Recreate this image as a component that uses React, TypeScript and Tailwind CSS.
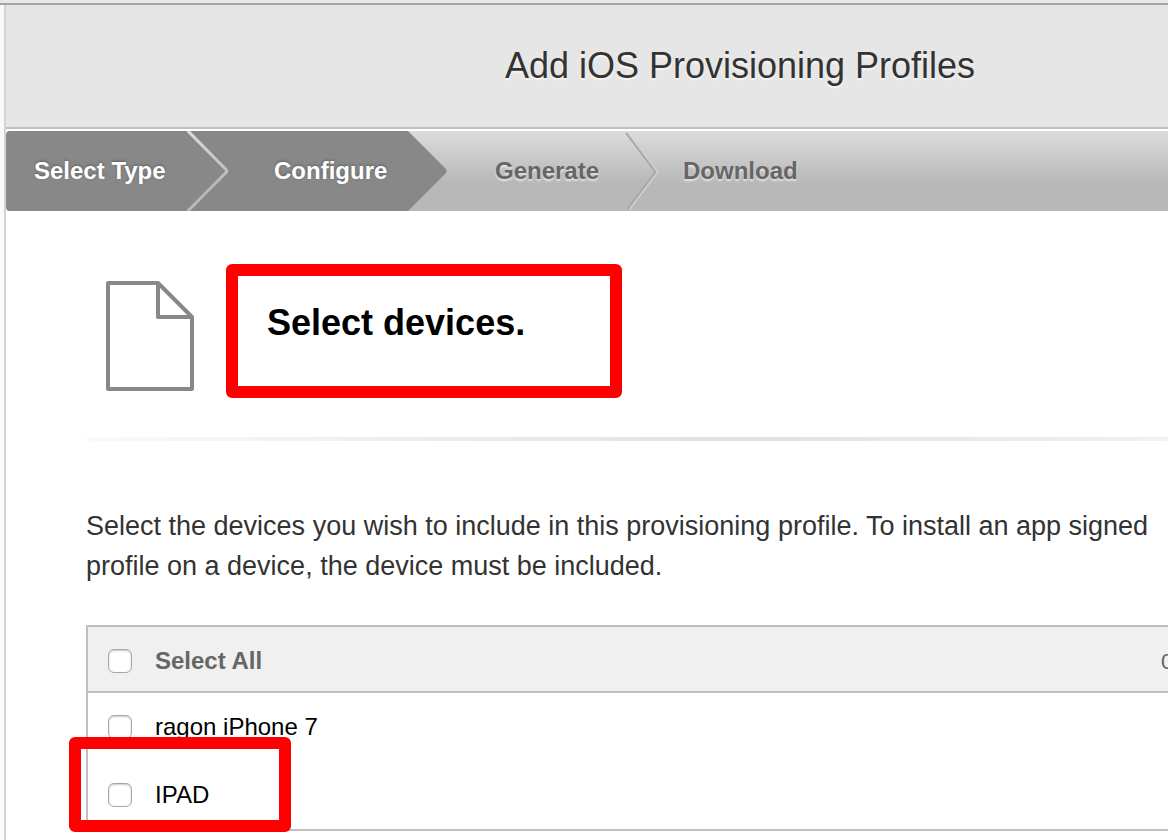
import React from "react";

const checkboxClass =
  "block size-6 appearance-none rounded-md border border-[#a6a6a6] bg-white shadow-[inset_0_1px_2px_rgba(0,0,0,0.22)] checked:bg-[#888888]";

const devices = [
  { id: "device-iphone", name: "ragon iPhone 7", highlighted: false },
  { id: "device-ipad", name: "IPAD", highlighted: true },
];

function StepDivider() {
  return (
    <svg className="block h-20 w-[42px] shrink-0" viewBox="0 0 42 80" aria-hidden="true">
      <defs>
        <linearGradient id="divider-stroke" gradientUnits="userSpaceOnUse" x1="0" y1="0" x2="0" y2="80">
          <stop offset="0" stopColor="#dcdcdc" />
          <stop offset="0.65" stopColor="#b8b8b8" />
          <stop offset="1" stopColor="#b8b8b8" />
        </linearGradient>
      </defs>
      <rect width="42" height="80" fill="#888888" />
      <path d="M-1 -2L39 38.500Q40.500 40 39 41.500L-1 82" fill="none" stroke="url(#divider-stroke)" strokeWidth="3" />
    </svg>
  );
}

function StepArrow() {
  return (
    <svg className="block h-20 w-[39px] shrink-0" viewBox="0 0 39 80" aria-hidden="true">
      <path d="M0 0L38 38Q39 40 38 42L0 80Z" fill="#888888" />
    </svg>
  );
}

function StepChevron() {
  return (
    <svg className="block h-20 w-9 shrink-0" viewBox="0 0 36 80" aria-hidden="true">
      <path d="M2.500 2L32.500 41L4.500 78" fill="none" stroke="#d0d0d0" strokeWidth="2" />
      <path d="M1 2L30.500 41L2.500 78" fill="none" stroke="#a8a8a8" strokeWidth="2" />
    </svg>
  );
}

function DocumentIcon() {
  return (
    <svg className="block h-[110px] w-[88px] shrink-0" viewBox="0 0 88 110" aria-hidden="true">
      <path
        d="M52 2H2V108H86V36L52 2V36H86"
        fill="none"
        stroke="#888888"
        strokeWidth="4"
        strokeLinejoin="round"
      />
    </svg>
  );
}

export default function App() {
  return (
    <div className="min-h-screen overflow-hidden bg-[#f9fafa] font-['Liberation_Sans',Arial,sans-serif]">
      <div className="h-[5px] border-b-2 border-[#a5a5a5] bg-[#e8e8e8]" />
      <main className="ml-1 min-h-[calc(100vh-5px)] min-w-[1470px] border-l-2 border-[#d2d4d3] bg-white">
        <header className="border-b-2 border-[#c0c0c0] bg-[#e6e6e6] pt-[38px] pb-[38px] text-center">
          <h1 className="text-[36px] leading-[46px] text-[#333333] [text-shadow:0_2px_2px_rgba(255,255,255,0.7)]">
            Add iOS Provisioning Profiles
          </h1>
        </header>

        <ol className="mt-0.5 flex h-20 items-center overflow-hidden rounded-l bg-linear-to-b from-[#dcdcdc] to-[#b8b8b8] to-65% text-[24px] font-bold text-[#666666] [text-shadow:0_2px_2px_rgba(255,255,255,0.6)]">
          <li className="flex items-center bg-[#888888] text-white [text-shadow:0_-1px_3px_rgba(0,0,0,0.3)]">
            <span className="w-[181px] pl-7">Select Type</span>
            <StepDivider />
          </li>
          <li
            aria-current="step"
            className="flex items-center text-white [text-shadow:0_-1px_3px_rgba(0,0,0,0.3)]"
          >
            <span className="flex h-20 w-[179px] items-center bg-[#888888] pl-[45px]">Configure</span>
            <StepArrow />
          </li>
          <li className="flex items-center">
            <span className="w-[178px] pl-12">Generate</span>
            <StepChevron />
          </li>
          <li className="pl-[22px]">Download</li>
        </ol>

        <div className="px-20">
          <section className="flex items-start pt-[70px] pb-[46px] pl-5">
            <DocumentIcon />
            <div className="relative ml-[73px] pt-5">
              <h2 className="text-[36px] leading-[44px] font-bold text-black">Select devices.</h2>
              <div className="pointer-events-none absolute top-[-17px] left-[-41px] h-[134px] w-[396px] rounded-md border-12 border-[#ff0000]" />
            </div>
          </section>
          <div className="h-1 bg-linear-to-r from-[#f9fafa] via-[#e0e2e1] to-[#f9fafa]" />

          <p className="pt-[65px] pb-[39px] text-[27px] leading-10 whitespace-nowrap text-[#333333]">
            Select the devices you wish to include in this provisioning profile. To install an app signed
            <br />
            profile on a device, the device must be included.
          </p>

          <table className="w-full table-fixed border-separate border-spacing-0 border-2 border-[#c0c0c0] text-left text-[24px]">
            <colgroup>
              <col className="w-[67px]" />
              <col />
              <col className="w-[231px]" />
            </colgroup>
            <thead className="bg-[#f0f0f0] text-[#666666]">
              <tr className="h-[66px]">
                <th className="border-b-2 border-[#c0c0c0] pt-1 pl-5">
                  <input id="select-all" type="checkbox" className={checkboxClass} />
                </th>
                <th className="border-b-2 border-[#c0c0c0] pt-1 font-bold">
                  <label htmlFor="select-all">Select All</label>
                </th>
                <td className="border-b-2 border-[#c0c0c0] pt-1 text-[22px]">0</td>
              </tr>
            </thead>
            <tbody className="text-black">
              {devices.map((device) => (
                <tr key={device.id} className="h-[68px]">
                  <td className="relative pl-5">
                    <input id={device.id} type="checkbox" className={checkboxClass} />
                    {device.highlighted && (
                      <div className="pointer-events-none absolute top-[-24px] left-[-19px] h-[95px] w-[222px] rounded-md border-12 border-[#ff0000]" />
                    )}
                  </td>
                  <td colSpan={2}>
                    <label htmlFor={device.id}>{device.name}</label>
                  </td>
                </tr>
              ))}
            </tbody>
          </table>
        </div>
      </main>
    </div>
  );
}
